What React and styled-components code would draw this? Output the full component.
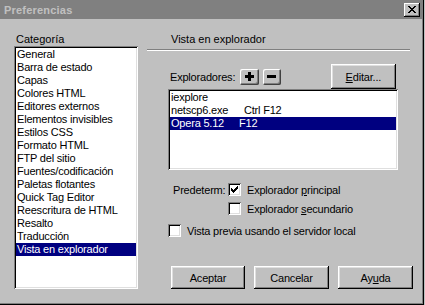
import React from 'react';
import styled, { createGlobalStyle } from 'styled-components';

const GlobalStyle = createGlobalStyle`
  html, body {
    margin: 0;
    padding: 0;
    background: #c0c0c0;
  }
  body {
    font-family: "Liberation Sans", Arial, sans-serif;
    font-size: 11px;
    color: #000;
  }
`;

const Window = styled.div`
  width: 424px;
  height: 305px;
  box-sizing: border-box;
  background: #c0c0c0;
  display: flex;
  flex-direction: column;
  box-shadow: inset -1px -1px #000, inset -2px -2px #808080;
  overflow: hidden;
`;

const TitleBar = styled.div`
  height: 19px;
  margin-right: 1px;
  background: #808080;
  display: flex;
  align-items: center;
  justify-content: space-between;
  padding: 0 3px 0 4px;
  flex-shrink: 0;
`;

const Title = styled.span`
  color: #c0c0c0;
  font-weight: bold;
  font-size: 11px;
  letter-spacing: 0.2px;
`;

const CloseButton = styled.div`
  width: 16px;
  height: 14px;
  box-sizing: border-box;
  background: #c0c0c0;
  display: flex;
  align-items: center;
  justify-content: center;
  box-shadow: inset -1px -1px #000, inset 1px 1px #fff, inset -2px -2px #808080;
`;

const Body = styled.div`
  display: flex;
  padding: 14px 0 0 14px;
`;

const LeftCol = styled.div`
  width: 124px;
  display: flex;
  flex-direction: column;
`;

const Label = styled.div`
  line-height: 13px;
  height: 13px;
  padding-left: ${(p) => p.$indent || 0}px;
  white-space: nowrap;
`;

const ListBox = styled.div`
  background: #fff;
  box-sizing: border-box;
  width: ${(p) => p.$width}px;
  height: ${(p) => p.$height}px;
  margin-top: ${(p) => p.$top || 0}px;
  margin-left: ${(p) => p.$left || 0}px;
  padding: 2px;
  box-shadow: inset 1px 1px #808080, inset -1px -1px #fff, inset 2px 2px #000, inset -2px -2px #dfdfdf;
`;

const Item = styled.div`
  height: 13px;
  line-height: 13px;
  padding-left: 1px;
  white-space: nowrap;
  display: flex;
  background: ${(p) => (p.$selected ? '#000080' : 'transparent')};
  color: ${(p) => (p.$selected ? '#fff' : '#000')};
  letter-spacing: -0.2px;
`;

const Cell = styled.span`
  width: ${(p) => p.$w}px;
  flex-shrink: 0;
`;

const RightCol = styled.div`
  width: 266px;
  margin-left: 9px;
  display: flex;
  flex-direction: column;
`;

const Separator = styled.div`
  height: 1px;
  margin: 3px 3px 0 0;
  background: #808080;
  border-bottom: 1px solid #fff;
`;

const Toolbar = styled.div`
  margin-top: 13px;
  height: 25px;
  display: flex;
  align-items: center;
  padding: 0 17px 0 23px;
`;

const ToolLabel = styled.span`
  margin-right: 5px;
  letter-spacing: -0.2px;
`;

const SmallButton = styled.div`
  width: 19px;
  height: 16px;
  margin-right: 4px;
  box-sizing: border-box;
  background: #c0c0c0;
  display: flex;
  align-items: center;
  justify-content: center;
  border-radius: 2px;
  box-shadow: inset -1px -1px #404040, inset 1px 1px #fff, inset -2px -2px #808080;
`;

const Button = styled.div`
  width: ${(p) => p.$w || 75}px;
  height: ${(p) => p.$h || 23}px;
  margin-left: ${(p) => p.$ml || 0}px;
  box-sizing: border-box;
  background: #c0c0c0;
  display: flex;
  align-items: center;
  justify-content: center;
  letter-spacing: -0.2px;
  box-shadow: inset -1px -1px #000, inset 1px 1px #fff, inset -2px -2px #808080, inset 2px 2px #dfdfdf;
`;

const U = styled.span`
  text-decoration: underline;
`;

const CheckRow = styled.div`
  display: flex;
  align-items: center;
  height: 13px;
  margin-top: ${(p) => p.$top}px;
  padding-left: ${(p) => p.$indent}px;
  letter-spacing: -0.2px;
  white-space: nowrap;
`;

const RowLabel = styled.span`
  width: 55px;
  flex-shrink: 0;
`;

const Box = styled.div`
  width: 13px;
  height: 13px;
  box-sizing: border-box;
  background: #fff;
  margin-right: 6px;
  flex-shrink: 0;
  display: flex;
  align-items: center;
  justify-content: center;
  box-shadow: inset 1px 1px #808080, inset -1px -1px #fff, inset 2px 2px #000, inset -2px -2px #dfdfdf;
`;

const ButtonRow = styled.div`
  display: flex;
  margin-top: 29px;
  padding-left: 24px;
`;

const categories = [
  'General',
  'Barra de estado',
  'Capas',
  'Colores HTML',
  'Editores externos',
  'Elementos invisibles',
  'Estilos CSS',
  'Formato HTML',
  'FTP del sitio',
  'Fuentes/codificación',
  'Paletas flotantes',
  'Quick Tag Editor',
  'Reescritura de HTML',
  'Resalto',
  'Traducción',
  'Vista en explorador',
];

const browsers = [
  { name: 'iexplore', key: '' },
  { name: 'netscp6.exe', key: 'Ctrl F12' },
  { name: 'Opera 5.12', key: 'F12', selected: true },
];

const Check = ({ checked }) => (
  <Box>
    {checked && (
      <svg width="7" height="7" viewBox="0 0 7 7">
        <path d="M0 2h1v1h1v1h1V3h1V2h1V1h1V0h1v3h-1v1h-1v1h-1v1h-1v1H2V6H1V5H0z" fill="#000" />
      </svg>
    )}
  </Box>
);

const App = () => {
  return (
    <>
      <GlobalStyle />
      <Window>
        <TitleBar>
          <Title>Preferencias</Title>
          <CloseButton>
            <svg width="8" height="7" viewBox="0 0 8 7">
              <path d="M0 0h2v1h1v1h2V1h1V0h2v1H7v1H6v1H5v1h1v1h1v1h1v1H6V6H5V5H3v1H2v1H0V6h1V5h1V4h1V3H2V2H1V1H0z" fill="#000" />
            </svg>
          </CloseButton>
        </TitleBar>
        <Body>
          <LeftCol>
            <Label $indent={2}>Categoría</Label>
            <ListBox $width={124} $height={243}>
              {categories.map((c) => (
                <Item key={c} $selected={c === 'Vista en explorador'}>
                  {c}
                </Item>
              ))}
            </ListBox>
          </LeftCol>
          <RightCol>
            <Label $indent={24}>Vista en explorador</Label>
            <Separator />
            <Toolbar>
              <ToolLabel>Exploradores:</ToolLabel>
              <SmallButton>
                <svg width="9" height="9" viewBox="0 0 9 9">
                  <path d="M3 0h3v3h3v3H6v3H3V6H0V3h3z" fill="#000" />
                </svg>
              </SmallButton>
              <SmallButton>
                <svg width="9" height="3" viewBox="0 0 9 3">
                  <path d="M0 0h9v3H0z" fill="#000" />
                </svg>
              </SmallButton>
              <Button $w={68} $h={25} $ml={46}>
                <span><U>E</U>ditar...</span>
              </Button>
            </Toolbar>
            <ListBox $width={230} $height={81} $left={21}>
              {browsers.map((b) => (
                <Item key={b.name} $selected={b.selected}>
                  <Cell $w={b.selected ? 68 : 73}>{b.name}</Cell>
                  <span>{b.key}</span>
                </Item>
              ))}
            </ListBox>
            <CheckRow $top={13} $indent={26}>
              <RowLabel>Predeterm:</RowLabel>
              <Check checked />
              <span>Explorador <U>p</U>rincipal</span>
            </CheckRow>
            <CheckRow $top={6} $indent={81}>
              <Check />
              <span>Explorador <U>s</U>ecundario</span>
            </CheckRow>
            <CheckRow $top={9} $indent={21}>
              <Check />
              <span>Vista previa usando el servidor local</span>
            </CheckRow>
            <ButtonRow>
              <Button $w={74}>Aceptar</Button>
              <Button $w={75} $ml={9}>Cancelar</Button>
              <Button $w={75} $ml={9}>Ay<U>u</U>da</Button>
            </ButtonRow>
          </RightCol>
        </Body>
      </Window>
    </>
  );
};

export default App;
